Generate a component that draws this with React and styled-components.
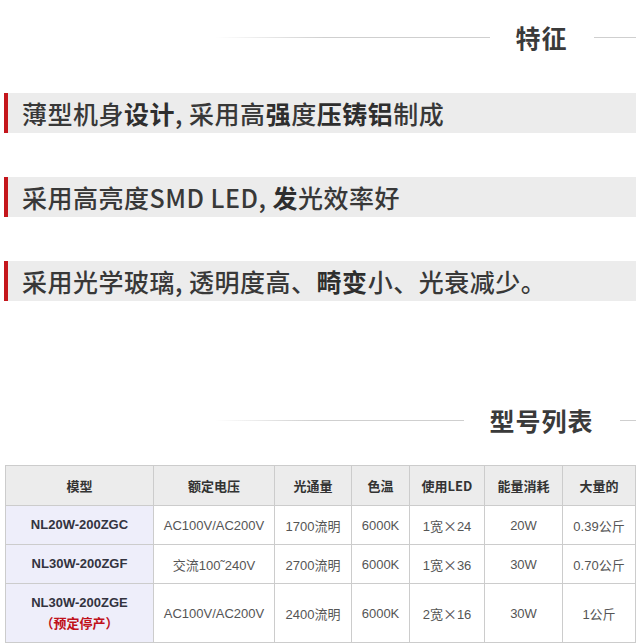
import styled, { createGlobalStyle } from 'styled-components';

const GlobalStyle = createGlobalStyle`
  html, body {
    margin: 0;
    padding: 0;
    background: #fff;
    overflow: hidden;
  }
  body {
    font-family: "Noto Sans CJK SC", "Liberation Sans", sans-serif;
    color: #333;
  }
`;

const Page = styled.div`
  width: 1083px;
  padding-top: 20px;
`;

const Heading = styled.div`
  width: 653px;
  margin: ${(p) => p.$top || 0}px auto 0;
  display: flex;
  align-items: center;
  height: 34px;
`;

const Line = styled.span`
  flex: 1;
  height: 1px;
  background: ${(p) =>
    p.$side === 'left'
      ? 'linear-gradient(to right, rgba(204,204,204,0), #cfcfcf 40%, #cfcfcf)'
      : 'linear-gradient(to right, #cfcfcf, #cfcfcf 60%, rgba(204,204,204,0))'};
`;

const HeadingText = styled.h2`
  margin: 0;
  padding: 0 26px;
  font-size: 25px;
  font-weight: 700;
  line-height: 34px;
  color: #3a3a3a;
  letter-spacing: 1px;
`;

const Feature = styled.div`
  margin: ${(p) => p.$top}px 0 0 4px;
  height: 40px;
  display: flex;
  align-items: center;
  border-left: 4px solid #c4161c;
  background: #ececec;
  padding-left: 14px;
  font-size: 25px;
  font-weight: 500;
  letter-spacing: 0.5px;
  color: #383838;
  white-space: pre;
  b {
    font-weight: 700;
    color: #2e2e2e;
  }
`;

const Table = styled.table`
  margin: 28px 0 0 5px;
  border-collapse: collapse;
  table-layout: fixed;
  width: 630px;
  font-family: "Liberation Sans", "Noto Sans CJK SC", sans-serif;
  th, td {
    border: 1px solid #cccccc;
    text-align: center;
    padding: 0;
  }
`;

const Head = styled.th`
  height: 39px;
  background: #ececec;
  font-size: 13px;
  font-weight: 700;
  color: #333;
  font-family: "Noto Sans CJK SC", sans-serif;
`;

const Cell = styled.td`
  height: ${(p) => p.$h || 38}px;
  font-size: 13px;
  color: #555;
  background: #fff;
`;

const Times = styled.span`
  font-family: "Noto Sans CJK SC", sans-serif;
  font-size: 14px;
`;

const ModelCell = styled.td`
  height: ${(p) => p.$h || 38}px;
  background: #eeeefa;
  font-size: 13px;
  font-weight: 700;
  color: #33333f;
  line-height: 20px;
`;

const Stop = styled.div`
  color: #c0101a;
  font-family: "Noto Sans CJK SC", sans-serif;
  font-weight: 700;
`;

const cols = [148, 121, 77, 58, 75, 78, 73];

const led = (n, c) => (
  <>
    {n}宽<Times>×</Times>{c}
  </>
);

const rows = [
  ['NL20W-200ZGC', 'AC100V/AC200V', '1700流明', '6000K', led(1, 24), '20W', '0.39公斤'],
  ['NL30W-200ZGF', '交流100˜240V', '2700流明', '6000K', led(1, 36), '30W', '0.70公斤'],
];

export default function App() {
  return (
    <>
      <GlobalStyle />
      <Page>
        <Heading>
          <Line $side="left" />
          <HeadingText>特征</HeadingText>
          <Line $side="right" />
        </Heading>

        <Feature $top={39}>
          薄型机身<b>设计</b>{', '}采用高<b>强</b>度<b>压铸铝</b>制成
        </Feature>
        <Feature $top={44}>
          采用高亮度SMD LED{', '}<b>发</b>光效率好
        </Feature>
        <Feature $top={44}>
          采用光学玻璃{', '}透明度高、<b>畸变</b>小、光衰减少。
        </Feature>

        <Heading $top={102}>
          <Line $side="left" />
          <HeadingText>型号列表</HeadingText>
          <Line $side="right" />
        </Heading>

        <Table>
          <colgroup>
            {cols.map((w, i) => (
              <col key={i} style={{ width: w }} />
            ))}
          </colgroup>
          <thead>
            <tr>
              <Head>模型</Head>
              <Head>额定电压</Head>
              <Head>光通量</Head>
              <Head>色温</Head>
              <Head>使用LED</Head>
              <Head>能量消耗</Head>
              <Head>大量的</Head>
            </tr>
          </thead>
          <tbody>
            {rows.map((r) => (
              <tr key={r[0]}>
                <ModelCell>{r[0]}</ModelCell>
                {r.slice(1).map((v, i) => (
                  <Cell key={i}>{v}</Cell>
                ))}
              </tr>
            ))}
            <tr>
              <ModelCell $h={58}>
                NL30W-200ZGE
                <Stop>（预定停产）</Stop>
              </ModelCell>
              <Cell $h={58}>AC100V/AC200V</Cell>
              <Cell $h={58}>2400流明</Cell>
              <Cell $h={58}>6000K</Cell>
              <Cell $h={58}>{led(2, 16)}</Cell>
              <Cell $h={58}>30W</Cell>
              <Cell $h={58}>1公斤</Cell>
            </tr>
          </tbody>
        </Table>
      </Page>
    </>
  );
}
